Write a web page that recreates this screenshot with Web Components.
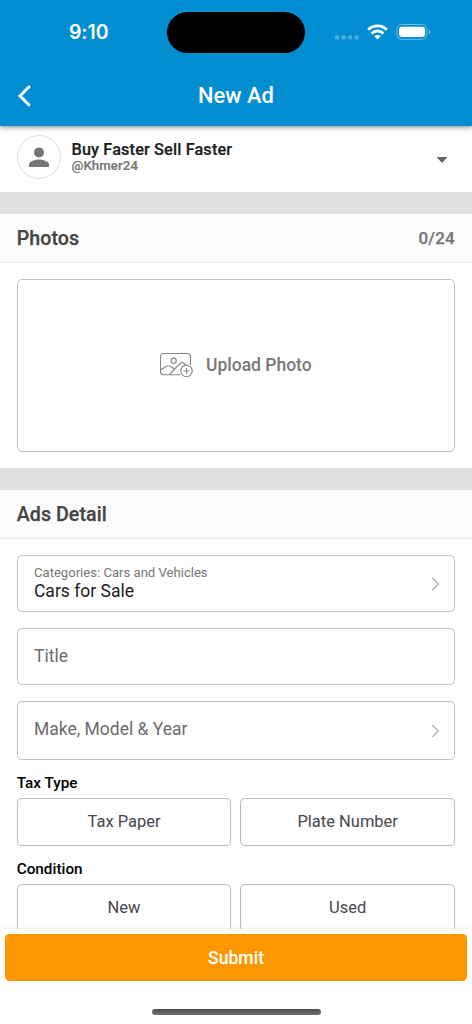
<!DOCTYPE html>
<html lang="en">
<head>
<meta charset="utf-8">
<meta name="viewport" content="width=device-width, initial-scale=1">
<title>New Ad</title>
<style>
html, body { margin: 0; height: 100%; overflow: hidden; }
body { font-family: Roboto, sans-serif; background: #fff; }
</style>
</head>
<body>
<ad-screen></ad-screen>
<script>
function define(name, html) {
  const template = document.createElement('template');
  template.innerHTML = '<style>*{box-sizing:border-box}:host{box-sizing:border-box}</style>' + html;
  customElements.define(name, class extends HTMLElement {
    constructor() {
      super();
      this.attachShadow({ mode: 'open' }).append(template.content.cloneNode(true));
    }
  });
}

define('status-bar', `
<style>
:host { display: grid; grid-template-columns: 167px 138px 1fr; height: 65px; padding-top: 12px; color: #fff; }
.time { font: 600 19.5px/41px Inter, sans-serif; padding-left: 69px; letter-spacing: -.1px; }
.island { height: 41px; border-radius: 21px; background: #000; }
.icons { display: flex; height: 41px; padding-left: 29px; }
svg { display: block; }
</style>
<div class="time">9:10</div>
<div class="island"></div>
<div class="icons">
<svg width="100" height="41" viewBox="334 12 100 41" fill="#fff">
<g opacity=".28"><rect x="335" y="35.3" width="4.2" height="4.2" rx="1.3"/><rect x="341.5" y="35.3" width="4.2" height="4.2" rx="1.3"/><rect x="348" y="35.3" width="4.2" height="4.2" rx="1.3"/><rect x="354.6" y="35.3" width="4.2" height="4.2" rx="1.3"/></g>
<g fill="none" stroke="#fff" stroke-width="2.9"><path d="M368.100 29.700a13.4 13.4 0 0 1 18.8 0"/><path d="M371.6 33.500a8.3 8.3 0 0 1 11.8 0"/></g>
<path d="M377.5 39.6l-3.3-3.3a4.7 4.7 0 0 1 6.6 0z"/>
<rect x="397" y="24.5" width="29.6" height="14.8" rx="4.8" fill="none" stroke="#fff" stroke-opacity=".42"/>
<rect x="399" y="26.7" width="26" height="10.4" rx="3"/>
<path d="M428.8 29.6q1.5.6 1.5 2.4t-1.5 2.4z" opacity=".5"/>
</svg>
</div>`);

define('nav-bar', `
<style>
:host { display: grid; grid-template-columns: 60px 1fr 60px; height: 61.3px; color: #fff; }
svg { display: block; margin: 18px 0 0 16px; }
.title { text-align: center; font-weight: 500; font-size: 21.9px; line-height: 61px; }
</style>
<svg width="18" height="26" viewBox="16 83 18 26" fill="none" stroke="#fff" stroke-width="2.9"><path d="M29.8 86L20 95.9l9.8 9.8"/></svg>
<div class="title"><slot></slot></div><div></div>`);

define('account-row', `
<style>
:host { display: flex; height: 66.2px; padding: 8.6px 24.5px 0 16.8px; }
.avatar { width: 44px; height: 44px; border: 1px solid #ddd; border-radius: 50%; }
.avatar svg { display: block; }
.who { flex: 1; padding: 4.9px 0 0 10.7px; }
.name { font-weight: 500; font-size: 16.300px; letter-spacing: .13px; line-height: 19px; color: #1c1c1e; -webkit-text-stroke: .2px; }
.handle { font-weight: 500; font-size: 13.200px; letter-spacing: .1px; line-height: 14px; color: #767676; -webkit-text-stroke: .2px; }
.caret { margin-top: 22px; width: 11px; height: 6px; background: #666; clip-path: polygon(0 0, 100% 0, 50% 100%); }
</style>
<div class="avatar"><svg width="42" height="42" viewBox="0 0 42 42" fill="#757575"><circle cx="21" cy="16.4" r="5"/><path d="M11 31v-2.500c0-3.300 6.700-5 10-5s10 1.700 10 5V31z"/></svg></div>
<div class="who"><div class="name"><slot name="name"></slot></div><div class="handle"><slot name="handle"></slot></div></div>
<div class="caret"></div>`);

define('section-head', `
<style>
:host { display: flex; justify-content: space-between; height: 71px; border-top: 22px solid #dfdfdf; border-bottom: 1px solid #e6e6e6; background: #fcfcfc; padding: 0 17px 0 16.700px; line-height: 48px; font-weight: 500; font-size: 19.600px; color: #444; -webkit-text-stroke: .25px; }
.title { line-height: 50px; height: 48px; letter-spacing: .08px; }
.end { font-size: 17px; letter-spacing: .25px; color: #767676; }
</style>
<span class="title"><slot></slot></span><span class="end"><slot name="end"></slot></span>`);

define('upload-box', `
<style>
:host { display: flex; align-items: center; justify-content: center; gap: 13px; height: 172.500px; margin: 16px 17px 16.500px 16.700px; border: 1px solid #c0c0c0; border-radius: 5px; color: #777; font-weight: 500; font-size: 17.500px; }
svg { display: block; margin-top: -1px; }
span { margin-top: -1px; }
</style>
<svg width="33" height="26" viewBox="0 0 33 26" fill="none" stroke="#858585" stroke-width="1.100"><path d="M20.500 22.700H3.500a3 3 0 0 1-3-3V4.500a3 3 0 0 1 3-3h24a3 3 0 0 1 3 3V13"/><circle cx="13.700" cy="8.700" r="2.600"/><path d="M.7 17.800c3.200-1.400 5-4 7.500-4s4 2.300 6.200 2.800"/><path d="M9.500 22.500L20.800 10.700q1.200-1 2.400 0L26 13.500"/><circle cx="26.500" cy="19" r="5.700" fill="#fff"/><path d="M26.500 15.900v6.200M23.400 19h6.200"/></svg>
<span><slot></slot></span>`);

define('form-field', `
<style>
:host { display: flex; align-items: center; justify-content: space-between; height: 57px; margin: 0 17px 16px 16.700px; padding: 0 14.500px 0 16.300px; border: 1px solid #c2c2c2; border-radius: 4.500px; color: #6c6c6c; font-size: 17.500px; line-height: 21px; }
:host([tall]) { height: 59px; }
:host([tall]) .text { padding-bottom: 2px; }
.label { display: block; font-size: 13.100px; line-height: 16px; color: #767676; }
:host([filled]) { color: #1c1c1e; }
svg { display: none; }
:host([arrow]) svg { display: block; }
</style>
<div class="text"><span class="label"><slot name="label"></slot></span><slot></slot></div>
<svg width="9" height="14" viewBox="0 0 9 14" fill="none" stroke="#b4b4b4" stroke-width="1.500"><path d="M1.300 1l6 6-6 6"/></svg>`);

define('choice-group', `
<style>
:host { display: block; margin: 0 17px 0 16.700px; }
.label { height: 22px; line-height: 14px; font-weight: 500; font-size: 15.300px; color: #000; }
.row { display: grid; grid-template-columns: 1fr 1fr; gap: 9px; }
.row ::slotted(*) { box-sizing: border-box; height: 47.500px; border: 1px solid #b9b9b9; border-radius: 4.500px; text-align: center; font-size: 16.500px; line-height: 45px; color: #47474d; }
</style>
<div class="label"><slot name="label"></slot></div>
<div class="row"><slot></slot></div>`);

define('submit-bar', `
<style>
:host { display: flex; flex-direction: column; align-items: center; height: 95px; padding: 5px 5px 0; background: #fff; box-shadow: 0 0 3px rgba(0,0,0,.12); position: relative; }
.button { width: 100%; height: 47px; border-radius: 4.500px; background: #ff9800; color: #fff; text-align: center; font-weight: 500; font-size: 17.600px; line-height: 49px; }
.home { margin-top: 28px; width: 169px; height: 5.500px; border-radius: 3px; background: linear-gradient(#4f4f4f, #737373); }
</style>
<div class="button"><slot></slot></div>
<div class="home"></div>`);

define('ad-screen', `
<style>
:host { display: flex; flex-direction: column; width: 472px; height: 1024px; overflow: hidden; background: #fff; }
header { flex: none; background: #038dd1; box-shadow: 0 1px 5px rgba(0,0,0,.5); position: relative; }
main { flex: 1; min-height: 0; overflow: hidden; }
.fields { padding-top: 16px; }
choice-group + choice-group { margin-top: 16px; }
submit-bar { flex: none; }
</style>
<header><status-bar></status-bar><nav-bar>New Ad</nav-bar></header>
<main>
<account-row><span slot="name">Buy Faster Sell Faster</span><span slot="handle">@Khmer24</span></account-row>
<section-head>Photos<span slot="end">0/24</span></section-head>
<upload-box>Upload Photo</upload-box>
<section-head>Ads Detail</section-head>
<div class="fields">
<form-field arrow filled><span slot="label">Categories: Cars and Vehicles</span>Cars for Sale</form-field>
<form-field>Title</form-field>
<form-field arrow tall>Make, Model &amp; Year</form-field>
</div>
<choice-group><span slot="label">Tax Type</span><div>Tax Paper</div><div>Plate Number</div></choice-group>
<choice-group><span slot="label">Condition</span><div>New</div><div>Used</div></choice-group>
</main>
<submit-bar>Submit</submit-bar>`);
</script>
</body>
</html>
